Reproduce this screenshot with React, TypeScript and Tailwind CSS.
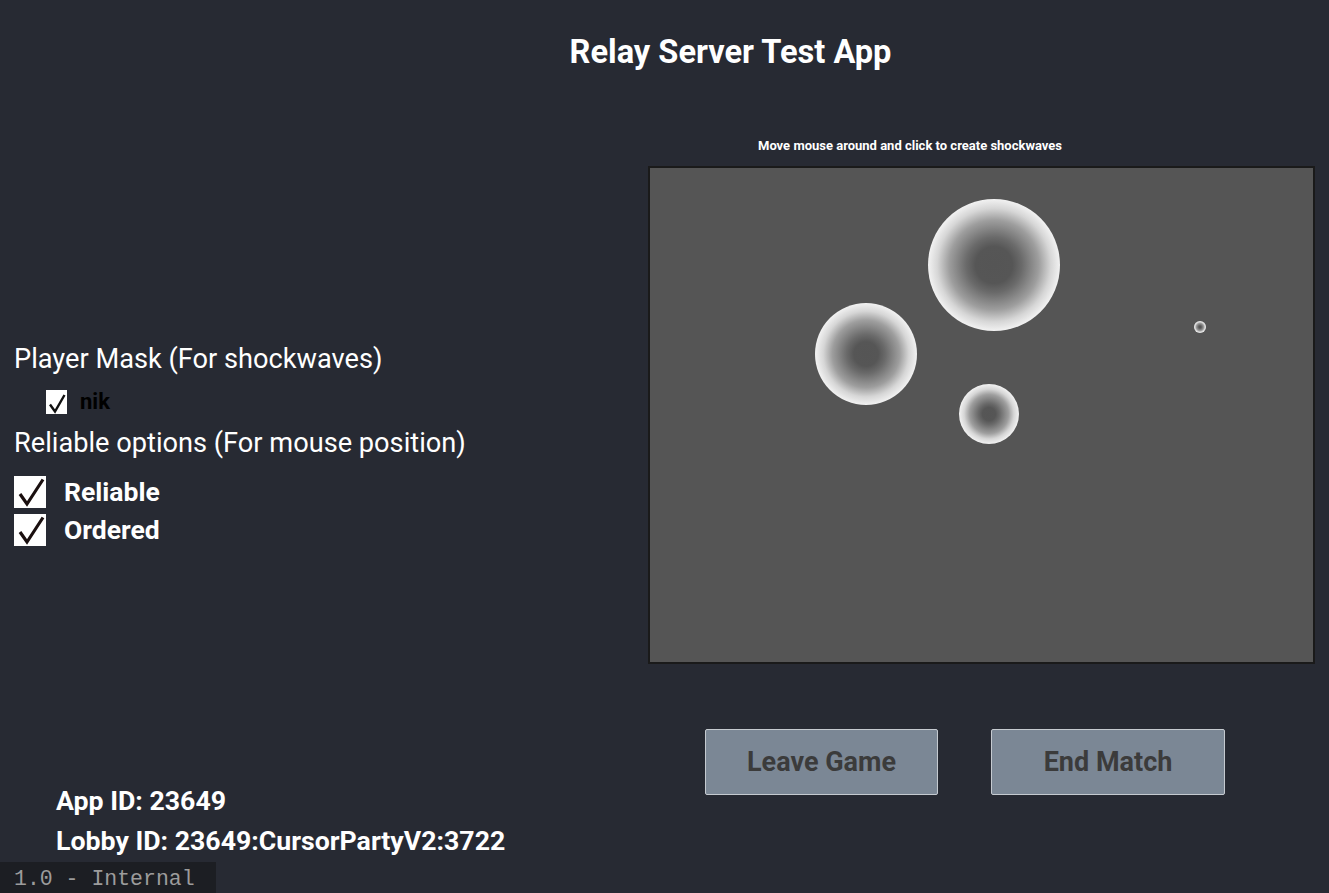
import React from "react";

function Check({ size }: { size: "sm" | "lg" }) {
  if (size === "sm") {
    return (
      <div className="w-[21px] h-[24px] bg-white">
        <svg width="21" height="24" viewBox="0 0 21 24">
          <path d="M4 14.5 L9 21.5 L18.5 5" fill="none" stroke="#111" strokeWidth="2.4" strokeLinejoin="miter" />
        </svg>
      </div>
    );
  }
  return (
    <div className="w-[32px] h-[32px] bg-white">
      <svg width="32" height="32" viewBox="0 0 32 32">
        <path d="M6 18 L13 28 L29 3.5" fill="none" stroke="#1a0f0f" strokeWidth="3.2" strokeLinejoin="miter" />
      </svg>
    </div>
  );
}

function Wave({ x, y, r, inner }: { x: number; y: number; r: number; inner: number }) {
  const mid = Math.round((inner + 100) / 2);
  return (
    <div
      className="absolute rounded-full"
      style={{
        left: x - r,
        top: y - r,
        width: r * 2,
        height: r * 2,
        background: `radial-gradient(circle closest-side, #555555 0%, #565656 ${inner - 8}%, #6a6a6a ${inner + 6}%, #9e9e9e ${mid}%, #d6d6d6 ${mid + 18}%, #f2f2f2 100%)`,
      }}
    />
  );
}

export default function App() {
  return (
    <div className="relative w-full h-[893px] bg-[#272a33] font-['Roboto',sans-serif] text-white overflow-hidden flex flex-col">
      <h1 className="pl-[132px] pt-[30px] text-center text-[32.6px] font-bold leading-[44px]">Relay Server Test App</h1>
      <div className="flex flex-1">
        <div className="w-[648px] flex flex-col">
          <div className="pl-[14px] mt-[269px] text-[27.2px] leading-[32px]">Player Mask (For shockwaves)</div>
          <div className="pl-[46px] mt-[15px] flex items-center gap-[13px]">
            <Check size="sm" />
            <span className="text-[22px] font-bold text-black leading-[24px]">nik</span>
          </div>
          <div className="pl-[14px] mt-[13px] text-[27.2px] leading-[32px]">Reliable options (For mouse position)</div>
          <div className="pl-[14px] mt-[17px] flex flex-col gap-[6px]">
            <div className="flex items-center gap-[18px]">
              <Check size="lg" />
              <span className="text-[26.5px] font-bold leading-[32px]">Reliable</span>
            </div>
            <div className="flex items-center gap-[18px]">
              <Check size="lg" />
              <span className="text-[26.5px] font-bold leading-[32px]">Ordered</span>
            </div>
          </div>
          <div className="mt-auto pl-[56px] text-[26.7px] font-bold leading-[40px]">
            <div>App ID: 23649</div>
            <div>Lobby ID: 23649:CursorPartyV2:3722</div>
          </div>
          <div className="mt-[1px] w-[216px] h-[31px] bg-[#1c1e23] text-[#9c9c9c] font-['Liberation_Mono',monospace] text-[21.5px] leading-[28px] pt-[3px] pl-[14px]">
            1.0 - Internal
          </div>
        </div>
        <div className="w-[667px] flex flex-col">
          <div className="mt-[64px] pl-[110px] text-[13px] font-bold leading-[16px]">Move mouse around and click to create shockwaves</div>
          <div className="mt-[12px] relative h-[498px] bg-[#555555] border-2 border-[#1a1a1a]">
            <Wave x={344} y={97} r={66} inner={36} />
            <Wave x={216} y={186} r={51} inner={32} />
            <Wave x={339} y={246} r={30} inner={30} />
            <Wave x={550} y={159} r={6} inner={25} />
          </div>
          <div className="mt-[65px] flex pl-[57px] gap-[53px]">
            <button className="w-[233px] h-[66px] bg-[#7b8795] border border-[#c5cad0] rounded-[2px] text-[#3b3b3b] text-[27px] font-bold">Leave Game</button>
            <button className="w-[234px] h-[66px] bg-[#7b8795] border border-[#c5cad0] rounded-[2px] text-[#3b3b3b] text-[27px] font-bold">End Match</button>
          </div>
        </div>
      </div>
    </div>
  );
}
